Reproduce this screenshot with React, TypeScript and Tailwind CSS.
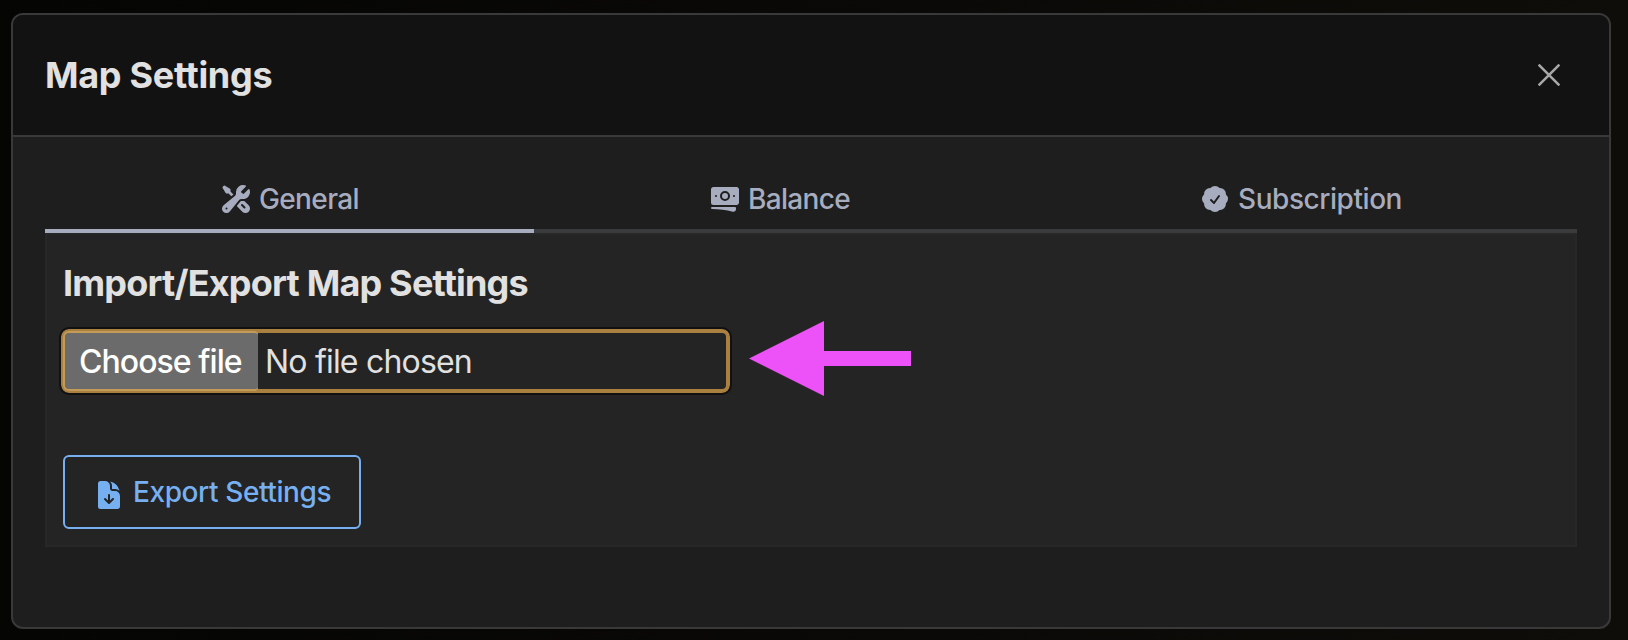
import type { ReactNode } from "react";
import {
  HiWrenchScrewdriver,
  HiBanknotes,
  HiCheckBadge,
  HiDocumentArrowDown,
} from "react-icons/hi2";

function Tab({ icon, label, className }: { icon: ReactNode; label: ReactNode; className: string }) {
  return (
    <button
      type="button"
      className={`flex h-[50px] shrink-0 items-center justify-center gap-[7px] border-b-4 pb-[14px] text-[28px] leading-8 font-[450] text-[#a7adbe] ${className}`}
    >
      {icon}
      {label}
    </button>
  );
}

export default function App() {
  return (
    <div className="h-[640px] w-[1628px] overflow-hidden bg-linear-to-r from-[#050504] to-[#0f0d0a] pt-[13px] pl-[11px] font-['Inter','Liberation_Sans',sans-serif]">
      <div className="flex h-[616px] w-[1600px] flex-col overflow-hidden rounded-xl border-2 border-[#393939] bg-[#1e1e1e]">
        <header className="flex h-[122px] items-center justify-between border-b-2 border-[#393939] bg-[#121212] pr-[49px] pl-8">
          <h1 className="text-[36px] leading-none font-bold tracking-[-0.3px] text-[#e1e1e1]">Map Settings</h1>
          <button type="button" aria-label="Close">
            <svg width="22" height="22" viewBox="0 0 22 22" fill="none" stroke="#a6a6a6" strokeWidth="2.5">
              <path d="M.6.6 21.4 21.4M21.4.6.6 21.4" />
            </svg>
          </button>
        </header>
        <main className="px-8 pt-[46px]">
          <nav className="flex w-[1532px]">
            <Tab
              className="w-[489px] border-[#a7adbe]"
              icon={<HiWrenchScrewdriver className="size-8" />}
              label={<span className="tracking-[-0.6px]">General</span>}
            />
            <Tab
              className="w-[494px] border-[#3a3b3d] pr-[3px]"
              icon={<HiBanknotes className="size-8" />}
              label={<span className="tracking-[-0.7px]">Balance</span>}
            />
            <Tab
              className="w-[549px] border-[#3a3b3d] pr-[4px]"
              icon={<HiCheckBadge className="size-8" />}
              label={<span className="tracking-[-0.45px]">Subscription</span>}
            />
          </nav>
          <section className="h-[314px] w-[1532px] border-2 border-[#272727] bg-[#242424] px-4 pt-7">
            <h2 className="text-[36px] leading-[40px] font-[650] tracking-[-0.8px] whitespace-nowrap text-[#e1e1e1]">
              Import/Export Map Settings
            </h2>
            <div className="-ml-0.5 flex items-center pt-[22px]">
              <label className="relative flex h-16 w-[669px] items-stretch rounded-[8px] border-4 border-[#aa8040] text-[32px] leading-[57px] whitespace-nowrap outline-2 outline-[#111111]">
                <span className="w-[193px] rounded-l-[4px] bg-[#6b6b6b] pl-[14px] font-[450] tracking-[-0.95px] text-white">
                  Choose file
                </span>
                <span className="pl-[7px] font-[430] tracking-[-0.8px] text-[#e1e1e1]">No file chosen</span>
                <span className="absolute -top-0.5 -bottom-0.5 -left-0.5 w-[195px] rounded-l-[6px] rounded-r-[4px] border-y-2 border-l-2 border-[#c39a58]" />
              </label>
              <svg className="-mt-1 ml-[19px]" width="162" height="75" viewBox="0 0 162 75" fill="#ed52f9">
                <path d="M0 37.5 75 0V30H162V45H75V75Z" />
              </svg>
            </div>
            <button
              type="button"
              className="mt-[59px] flex h-[74px] w-[298px] items-center rounded-md border-2 border-[#76b0f1] pl-7 text-[28px] font-[450] whitespace-nowrap text-[#76b0f1]"
            >
              <HiDocumentArrowDown className="mt-1.5 size-8" />
              <span className="ml-2 tracking-[-0.4px]">Export Settings</span>
            </button>
          </section>
        </main>
      </div>
    </div>
  );
}
